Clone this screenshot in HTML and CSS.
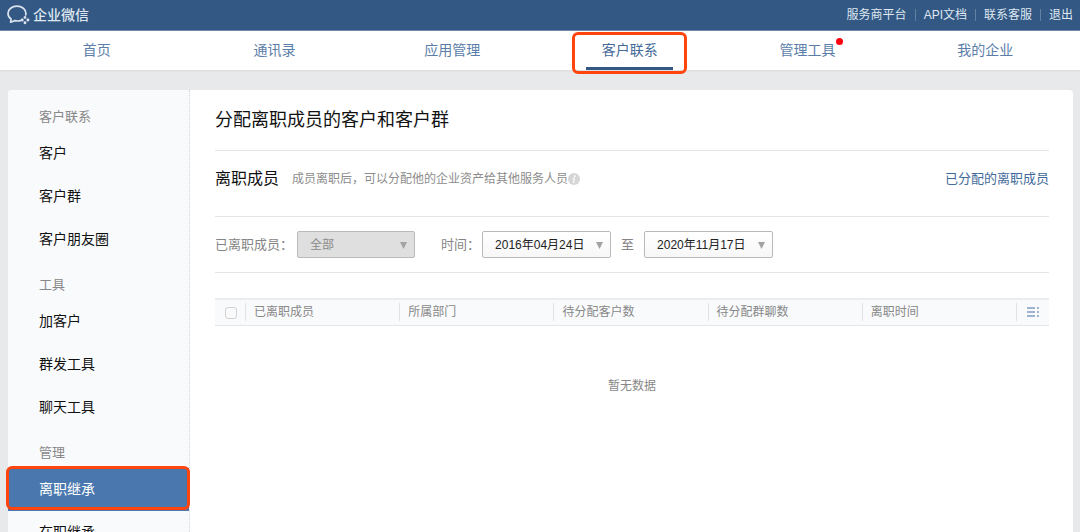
FILE: index.html
```html
<!DOCTYPE html>
<html lang="zh-CN">
<head>
<meta charset="utf-8">
<title>企业微信</title>
<link rel="stylesheet" href="styles.css">
</head>
<body>
<div class="app">
  <header class="topbar">
    <div class="brand">
      <svg class="brand-icon" width="24" height="20" viewBox="0 0 24 20" fill="none" stroke="#d9e2ee" stroke-width="1.7" stroke-linecap="round" stroke-linejoin="round">
        <path d="M13.6 15.6C11.8 16.2 9.8 16.1 7.9 15.6L3.6 17.2L4.1 14C2.2 12.7 1 10.8 1 8.4C1 4.3 5 1.2 10 1.2S18.9 4.3 18.9 8.4C18.9 9 18.8 9.5 18.7 10"/>
        <g stroke="none" fill="#d9e2ee">
          <path d="M18 10.9C19.4 10.9 19.6 12.2 19.2 13.4C18.6 14 17.5 14 16.8 13.4C16.4 12.2 16.6 10.9 18 10.9Z"/>
          <path d="M22.4 15C22.4 16.4 21.1 16.6 19.9 16.2C19.3 15.6 19.3 14.5 19.9 13.8C21.1 13.4 22.4 13.6 22.4 15Z"/>
          <path d="M18 19.2C16.6 19.2 16.4 17.9 16.8 16.7C17.4 16.1 18.5 16.1 19.2 16.7C19.6 17.9 19.4 19.2 18 19.2Z"/>
          <path d="M13.7 15C13.7 13.6 15 13.4 16.2 13.8C16.8 14.4 16.8 15.5 16.2 16.2C15 16.6 13.7 16.4 13.7 15Z"/>
        </g>
      </svg>
      <span class="brand-name">企业微信</span>
    </div>
    <div class="top-links">
      <a href="#">服务商平台</a><i class="bar"></i>
      <a href="#">API文档</a><i class="bar"></i>
      <a href="#">联系客服</a><i class="bar"></i>
      <a href="#">退出</a>
    </div>
  </header>

  <nav class="mainnav">
    <a href="#">首页</a>
    <a href="#">通讯录</a>
    <a href="#">应用管理</a>
    <a href="#" class="current"><span class="tab">客户联系</span></a>
    <a href="#"><span class="notice">管理工具</span></a>
    <a href="#">我的企业</a>
  </nav>

  <div class="page">
    <aside class="sidebar">
      <section class="group">
        <h3>客户联系</h3>
        <a href="#">客户</a>
        <a href="#">客户群</a>
        <a href="#">客户朋友圈</a>
      </section>
      <section class="group">
        <h3>工具</h3>
        <a href="#">加客户</a>
        <a href="#">群发工具</a>
        <a href="#">聊天工具</a>
      </section>
      <section class="group">
        <h3>管理</h3>
        <a href="#" class="selected">离职继承</a>
        <a href="#">在职继承</a>
      </section>
    </aside>

    <main class="content">
      <h1>分配离职成员的客户和客户群</h1>
      <div class="intro">
        <h2>离职成员</h2>
        <p>成员离职后，可以分配他的企业资产给其他服务人员</p>
        <svg class="info" width="12" height="12" viewBox="0 0 12 12">
          <circle cx="6" cy="6" r="6" fill="#d6d6d6"/>
          <circle cx="6.8" cy="3.2" r="0.9" fill="#fff"/>
          <path d="M5 5.2H6.4L5.4 9.2H6.6" fill="none" stroke="#fff" stroke-width="1.1"/>
        </svg>
        <a href="#" class="assigned">已分配的离职成员</a>
      </div>

      <form class="filters">
        <label for="member">已离职成员：</label>
        <div class="picker muted">
          <select id="member" disabled><option>全部</option></select>
          <svg width="7" height="8" viewBox="0 0 7 8"><path d="M0 1H7L3.5 8Z"/></svg>
        </div>
        <label for="from" class="time">时间：</label>
        <div class="picker">
          <select id="from"><option>2016年04月24日</option></select>
          <svg width="7" height="8" viewBox="0 0 7 8"><path d="M0 1H7L3.5 8Z"/></svg>
        </div>
        <label for="to" class="until">至</label>
        <div class="picker">
          <select id="to"><option>2020年11月17日</option></select>
          <svg width="7" height="8" viewBox="0 0 7 8"><path d="M0 1H7L3.5 8Z"/></svg>
        </div>
      </form>

      <table class="members">
        <thead>
          <tr>
            <th class="check"><input type="checkbox" aria-label="全选"></th>
            <th><span>已离职成员</span></th>
            <th><span>所属部门</span></th>
            <th><span>待分配客户数</span></th>
            <th><span>待分配群聊数</span></th>
            <th><span>离职时间</span></th>
            <th class="config">
              <span><button type="button" aria-label="设置列">
                <svg width="12" height="10" viewBox="0 0 12 10" stroke="#7f9cc0" stroke-width="1.4"><path d="M0 1H8M0 5H8M0 9H8M10 1H12M10 5H12M10 9H12"/></svg>
              </button></span>
            </th>
          </tr>
        </thead>
        <tbody>
          <tr><td colspan="7">暂无数据</td></tr>
        </tbody>
      </table>
    </main>
  </div>
</div>
</body>
</html>
```
FILE: styles.css
```css
* { box-sizing: border-box; }

body {
  margin: 0;
  background: #e8e9eb;
  color: #111;
  font-family: "Liberation Sans", "Noto Sans CJK SC", sans-serif;
  font-size: 12px;
}

a { color: inherit; text-decoration: none; }
h1, h2, h3, p { margin: 0; font-weight: 400; }

.app {
  display: flex;
  flex-direction: column;
  height: 100vh;
  overflow: hidden;
}

.topbar {
  display: flex;
  flex: none;
  justify-content: space-between;
  align-items: center;
  height: 31px;
  padding: 0 7px;
  background: #335883;
  border-bottom: 1px solid #6483a9;
  color: #dfe7f1;
}
.brand { display: flex; align-items: center; gap: 2px; }
.brand-name { font-size: 14px; font-weight: 500; line-height: 20px; }
.top-links { display: flex; align-items: center; gap: 8px; line-height: 20px; }
.bar { width: 1px; height: 12px; background: #6280a4; }

.mainnav {
  display: flex;
  flex: none;
  height: 39px;
  padding: 0 6px 0 8px;
  background: #fff;
  box-shadow: 0 1px 2px #d9dadd;
  color: #5b7ea9;
  font-size: 14px;
  line-height: 38px;
  text-align: center;
}
.mainnav a { flex: 1; }
.mainnav .current { color: #456a98; }
.tab {
  position: relative;
  display: inline-block;
  width: 87px;
  height: 39px;
  border-bottom: 3px solid #335883;
}
.tab::after {
  content: "";
  position: absolute;
  inset: 1px -14px -7px;
  border: 3px solid #ff450d;
  border-radius: 6px;
}
.notice { position: relative; }
.notice::after {
  content: "";
  position: absolute;
  top: -4px;
  right: -7px;
  width: 7px;
  height: 7px;
  border-radius: 50%;
  background: #fb0410;
}

.page {
  display: flex;
  flex: 1;
  min-height: 0;
  margin: 20px 7px 0 8px;
  border-radius: 4px 4px 0 0;
  background: #fff;
}

.sidebar {
  flex: none;
  width: 182px;
  padding-top: 14px;
  border-right: 1px dotted #d5d8dc;
  border-radius: 4px 0 0 0;
  background: #f9fafc;
}
.group { margin-bottom: 11px; }
.group h3 {
  margin-bottom: 2px;
  padding-left: 31px;
  color: #888;
  font-size: 13px;
  line-height: 26px;
}
.group a {
  display: block;
  padding-left: 31px;
  font-size: 14px;
  line-height: 43px;
}
.group .selected {
  position: relative;
  background: #4a78ae;
  color: #fff;
}
.selected::after {
  content: "";
  position: absolute;
  inset: -2px -1px 1px -2px;
  border: 3px solid #ff450d;
  border-radius: 6px;
}

.content { flex: 1; padding: 0 24px 0 25px; }
.content h1 {
  border-bottom: 1px solid #e2e5ea;
  font-size: 18px;
  line-height: 60px;
}

.intro {
  display: flex;
  align-items: center;
  height: 66px;
  padding-bottom: 10px;
  border-bottom: 1px solid #e4e5e7;
}
.intro h2 { font-size: 16px; line-height: 24px; }
.intro p { margin-left: 13px; color: #8c8c8c; line-height: 20px; }
.assigned { margin-left: auto; color: #3f6a9a; font-size: 13px; line-height: 20px; }

.filters {
  display: flex;
  align-items: center;
  height: 56px;
  border-bottom: 1px solid #e4e5e7;
  color: #858585;
  font-size: 13px;
  line-height: 20px;
}
.filters .time { margin: 0 2px 0 26px; }
.filters .until { margin: 0 10px; }

.picker { display: grid; align-items: center; width: 129px; }
.picker.muted { width: 118px; margin-left: 4px; }
.picker select {
  grid-area: 1 / 1;
  width: 100%;
  height: 27px;
  padding: 0 12px;
  appearance: none;
  border: 1px solid #b9b9b9;
  border-radius: 2px;
  background: linear-gradient(#fff, #f7f7f7);
  color: #222;
  font: inherit;
  font-size: 12px;
  opacity: 1;
}
.picker.muted select { background: #dfdfdf; color: #8a8a8a; }
.picker svg {
  grid-area: 1 / 1;
  justify-self: end;
  margin-right: 8px;
  fill: #a3a3a3;
  pointer-events: none;
}

.members {
  width: 100%;
  margin-top: 25px;
  border-collapse: separate;
  border-spacing: 0;
  table-layout: fixed;
  color: #888;
}
.members th {
  height: 28px;
  padding: 0 0 1px;
  border-top: 2px solid #ececef;
  border-bottom: 1px solid #e4e6e9;
  background: #f9fafc;
  font-weight: 400;
  text-align: left;
}
.members th span {
  display: block;
  padding-left: 8px;
  border-left: 1px solid #e0e2e5;
  line-height: 18px;
}
.members .check { width: 30px; padding-left: 10px; }
.members .config { width: 33px; }
.members .config span { display: flex; align-items: center; height: 18px; padding-left: 10px; }
.check input {
  display: block;
  width: 12px;
  height: 12px;
  margin: 2px 0 0;
  appearance: none;
  border: 1px solid #d2d2d2;
  border-radius: 3px;
  background: #fafafa;
}
.config button {
  display: flex;
  padding: 0;
  border: 0;
  background: none;
}
.members td {
  height: 116px;
  padding: 0;
  text-align: center;
}
```
